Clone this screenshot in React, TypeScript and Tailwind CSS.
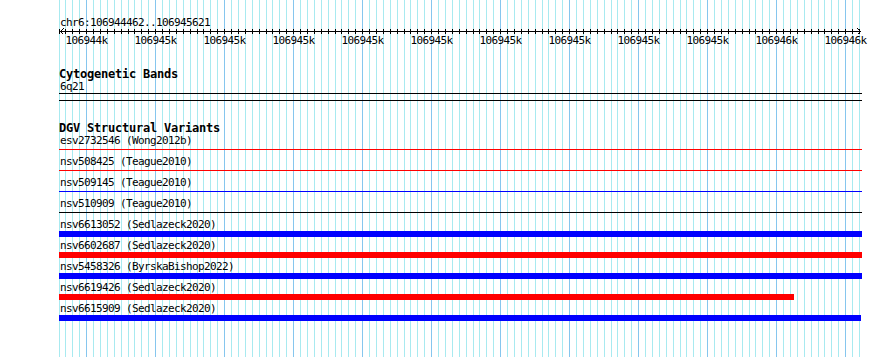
const GRID = Array.from({ length: 117 }, (_, i) => Math.floor(59 + 6.9 * i));

const TICKS = [
  '106944k', '106945k', '106945k', '106945k', '106945k', '106945k',
  '106945k', '106945k', '106945k', '106945k', '106946k', '106946k',
];

type Row = { label: string; color: string; kind: 'line' | 'bar'; width?: number };

const ROWS: Row[] = [
  { label: 'esv2732546 (Wong2012b)', color: 'bg-[#ff0000]', kind: 'line' },
  { label: 'nsv508425 (Teague2010)', color: 'bg-[#ff0000]', kind: 'line' },
  { label: 'nsv509145 (Teague2010)', color: 'bg-[#0000ff]', kind: 'line' },
  { label: 'nsv510909 (Teague2010)', color: 'bg-black', kind: 'line' },
  { label: 'nsv6613052 (Sedlazeck2020)', color: 'bg-[#0000ff]', kind: 'bar' },
  { label: 'nsv6602687 (Sedlazeck2020)', color: 'bg-[#ff0000]', kind: 'bar' },
  { label: 'nsv5458326 (ByrskaBishop2022)', color: 'bg-[#0000ff]', kind: 'bar' },
  { label: 'nsv6619426 (Sedlazeck2020)', color: 'bg-[#ff0000]', kind: 'bar', width: 735 },
  { label: 'nsv6615909 (Sedlazeck2020)', color: 'bg-[#0000ff]', kind: 'bar', width: 802 },
];

function Grid() {
  return (
    <svg className="absolute inset-0" width={890} height={357} shapeRendering="crispEdges">
      {GRID.map((x, i) => (
        <line
          key={i}
          x1={x + 0.5}
          x2={x + 0.5}
          y1={0}
          y2={357}
          stroke={(i - 4) % 10 === 0 ? '#86c6ee' : '#a8eaf0'}
          strokeWidth={1}
        />
      ))}
    </svg>
  );
}

function Ruler() {
  return (
    <svg width={862} height={7} className="block -ml-[59px]" shapeRendering="crispEdges">
      <line x1={60} x2={861} y1={3.5} y2={3.5} stroke="black" />
      {GRID.map((x, i) => (
        <line key={i} x1={x + 0.5} x2={x + 0.5} y1={1} y2={6} stroke="black" />
      ))}
      <path d="M63.5 0.5 L60.5 3.5 L63.5 6.5" fill="none" stroke="black" />
      <path d="M857.5 0.5 L860.5 3.5 L857.5 6.5" fill="none" stroke="black" />
    </svg>
  );
}

// text boxes keep their row height; the taller leading drops the glyphs 1px
const txt = 'h-[12px] text-[11px] leading-[14px] tracking-[-0.62px] whitespace-pre';
const head = 'h-[13px] text-[12px] leading-[15px] tracking-[-0.22px] font-bold whitespace-pre';

export default function App() {
  return (
    <div className="relative w-[890px] h-[357px] bg-white overflow-hidden text-black font-['DejaVu_Sans_Mono',monospace]">
      <Grid />
      <div className="relative pl-[59px] pt-[16px] w-[862px]">
        <div className={`${txt} pl-px`}>chr6:106944462..106945621</div>
        <Ruler />
        <div className="flex gap-[27px] ml-[6.5px] h-[12px] text-[11px] leading-[12px] tracking-[-0.62px]">
          {TICKS.map((t, i) => (
            <span key={i} className="w-[42px] shrink-0 text-center">{t}</span>
          ))}
        </div>

        <div className={`mt-[20px] ${head}`}>Cytogenetic Bands</div>
        <div className={`${txt} pl-px`}>6q21</div>
        <div className="mt-[1px] h-px w-[803px] bg-black" />
        <div className="mt-[6px] h-px w-[803px] bg-black" />

        <div className={`mt-[20px] ${head}`}>DGV Structural Variants</div>
        {ROWS.map((r) =>
          r.kind === 'line' ? (
            <div key={r.label} className="h-[21px]">
              <div className={`${txt} pl-px`}>{r.label}</div>
              <div className={`mt-[3px] h-px w-[803px] ${r.color}`} />
            </div>
          ) : (
            <div key={r.label} className="h-[21px]">
              <div className={`${txt} pl-px`}>{r.label}</div>
              <div className={`mt-[1px] h-[6px] ${r.color}`} style={{ width: r.width ?? 803 }} />
            </div>
          )
        )}
      </div>
    </div>
  );
}
